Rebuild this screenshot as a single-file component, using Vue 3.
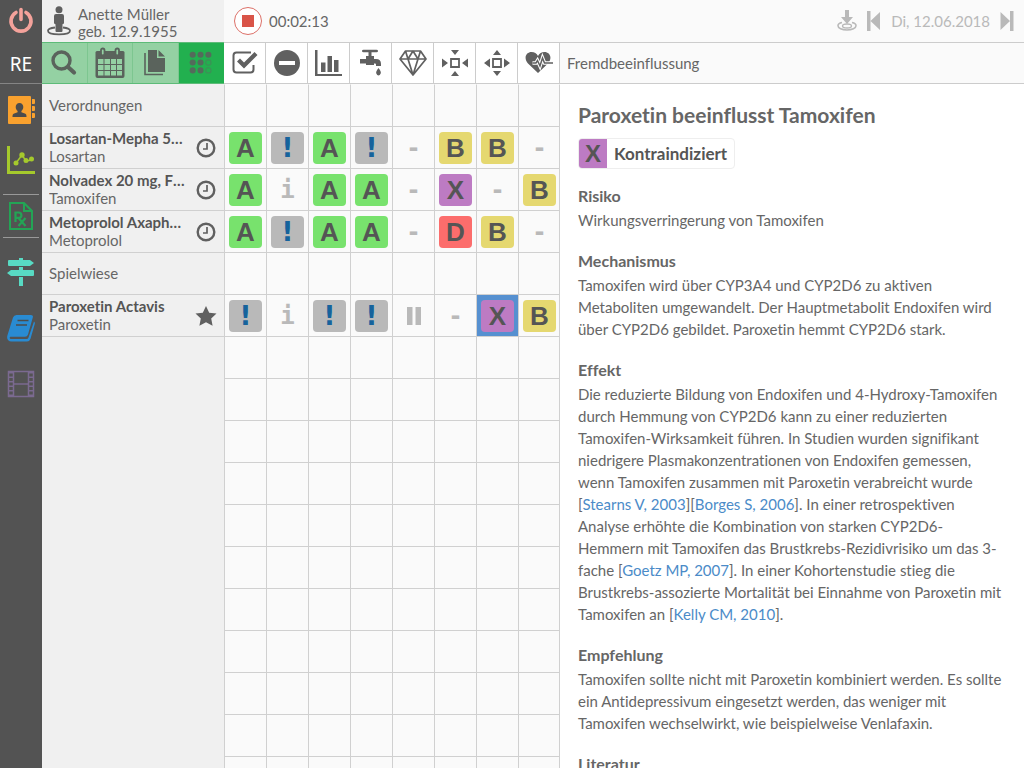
<script setup>
const rows = [
  { title: 'Verordnungen' },
  { name: 'Losartan-Mepha 50 mg, Filmtabletten', agent: 'Losartan', icon: 'clock', cells: 'A!A!-BB-' },
  { name: 'Nolvadex 20 mg, Filmtabletten', agent: 'Tamoxifen', icon: 'clock', cells: 'AiAA-X-B' },
  { name: 'Metoprolol Axapharm 50 mg', agent: 'Metoprolol', icon: 'clock', cells: 'A!AA-DB-' },
  { title: 'Spielwiese' },
  { name: 'Paroxetin Actavis', agent: 'Paroxetin', icon: 'star', cells: '!i!!"-XB', selected: 6 },
  ...Array.from({ length: 11 }, () => ({}))
]
const kinds = { A: 'ok', '!': 'warn', i: 'info', '-': 'none', '"': 'pause', B: 'minor', X: 'contra', D: 'major' }
const columns = ['check', 'minus', 'bars', 'tap', 'gem', 'inward', 'outward', 'heart']
const labels = ['Indikation', 'Kontraindikation', 'Dosierung', 'Niere', 'Qualität', 'Wird beeinflusst', 'Fremdbeeinflussung', 'Herz']
const cellOf = (row, i) => (row.cells ? row.cells[i] : '')
</script>

<template>
  <div class="app">
    <nav class="side" aria-label="Hauptmenü">
      <button class="power" aria-label="Abmelden">
        <svg width="26" height="28" viewBox="0 0 26 28" fill="none" stroke="#f4a29b" stroke-width="3.6" stroke-linecap="round"><path d="M8 5.5a10 10 0 1 0 10 0M13 2.5v10" /></svg>
      </button>
      <div class="user">RE</div>
      <button class="contacts" aria-label="Patienten">
        <svg width="28" height="30" viewBox="0 0 28 30"><path fill="#f9a12e" d="M2 1h21q1 0 1 1v26q0 1-1 1H2q-1 0-1-1V2q0-1 1-1zM25 4h2q1 0 1 1v3q0 1-1 1h-2zM25 11h2q1 0 1 1v3q0 1-1 1h-2zM25 18h2q1 0 1 1v3q0 1-1 1h-2z" /><path fill="#4c4c4c" d="M12.500 8c2.400 0 3.800 1.700 3.800 4 0 1.700-.8 3.200-1.900 4v1.300l4 1.500c.8.400 1.100 1.200 1.100 3.200h-14c0-2 .3-2.800 1.100-3.200l4-1.500V16c-1.100-.8-1.900-2.300-1.900-4 0-2.300 1.400-4 3.800-4z" /></svg>
      </button>
      <button class="chart" aria-label="Verlauf">
        <svg width="28" height="28" viewBox="0 0 28 28" fill="none" stroke="#a5c92c"><path stroke-width="3" d="M1.500 0v26.500H28" /><path stroke-width="1.500" d="M9 17l6-8 4 6 6-1" /><g fill="#a5c92c" stroke="none"><circle cx="9" cy="17" r="2.500" /><circle cx="15" cy="9" r="2.700" /><circle cx="19" cy="14.500" r="2.500" /><circle cx="24.500" cy="13" r="2.500" /></g></svg>
      </button>
      <button class="rx" aria-label="Medikation">
        <svg width="24" height="28" viewBox="0 0 24 28" fill="none" stroke="#23a455"><path stroke-width="2" d="M1 1h14l8 8v18H1zM15 1v8h8" /><path stroke-width="2.200" d="M6.500 20V10.500h3.200a2.700 2.700 0 0 1 0 5.400H6.500M9.500 16l7 8M16.500 16l-7 8" /></svg>
      </button>
      <button class="item" aria-label="Leitlinien">
        <svg width="28" height="28" viewBox="0 0 28 28" fill="#58dac3"><path d="M12 0h4v2h-4zM2 2h21l4 3-4 3H2q-1 0-1-1V3q0-1 1-1zM12 9h4v3h-4zM4 12h22q1 0 1 1v4q0 1-1 1H4l-4-3zM12 19h4v9h-4z" /></svg>
      </button>
      <button class="item" aria-label="Kompendium">
        <svg width="28" height="28" viewBox="0 0 28 28"><path fill="#298bd2" d="M9.500 1H24q2.500 0 1.800 2.500L21 20.500q-.8 2.200-3 2.200H3.800c-1.600 0-1.400 2.300.2 2.300h15.500q1.500 0 2-1.500L27 7.500q1.200.9.800 2.300l-4.300 15q-.8 2.700-3.500 2.700H4.500C1 27.500-.6 24.600.4 21.500L6 3.500Q6.900 1 9.500 1z" /><path stroke="#4c4c4c" stroke-width="1.600" d="M10.500 6.500h11M9 11h11" /></svg>
      </button>
      <button class="item" aria-label="Videos">
        <svg width="28" height="28" viewBox="0 0 28 28" fill="none" stroke="#7b6a90"><path stroke-width="1.500" d="M1.500 1.500h25v25h-25zM6.500 1v26M21.500 1v26M6.500 14h15" /><path stroke-width="5" stroke-dasharray="1.500 3" d="M4 2v24M24 2v24" /></svg>
      </button>
    </nav>

    <div class="work">
      <header class="top">
        <div class="patient">
          <svg width="24" height="30" viewBox="0 0 24 30"><circle cx="12" cy="3.800" r="3.500" fill="#606060" /><path fill="#606060" d="M9 8h6q2 0 2 2v7q0 1-1.500 1.200V25q0 1-1 1h-5q-1 0-1-1v-6.800Q7 18 7 17v-7q0-2 2-2z" /><path fill="none" stroke="#606060" stroke-width="1.800" d="M8 21.500c-4 .5-7 1.600-7 3.200 0 2.300 5 3.600 11 3.600s11-1.300 11-3.600c0-1.600-3-2.700-7-3.200" /></svg>
          <div class="person">Anette Müller<br>geb. 12.9.1955</div>
        </div>
        <div class="session">
          <button class="record" aria-label="Aufnahme stoppen"><span class="stop"></span></button>
          <span class="timer">00:02:13</span>
          <div class="day">
            <button aria-label="Heute"><svg width="20" height="22" viewBox="0 0 20 22"><path fill="#b9b9b9" d="M8 0h4v7h4l-6 7-6-7h4z" /><path fill="none" stroke="#b9b9b9" stroke-width="1.600" d="M5 12.500c-2.500.5-4 1.500-4 3.200 0 2.500 4 4.300 9 4.300s9-1.800 9-4.300c0-1.700-1.500-2.700-4-3.200" /><ellipse cx="10" cy="16" rx="4.500" ry="2" fill="none" stroke="#b9b9b9" stroke-width="1.300" /></svg></button>
            <button aria-label="Vorheriger Tag"><svg width="14" height="20" viewBox="0 0 14 20"><path fill="#b9b9b9" d="M0 0h3.500v20H0zM13 1v18L3.500 10z" /></svg></button>
            <span class="date">Di, 12.06.2018</span>
            <button aria-label="Nächster Tag"><svg width="14" height="20" viewBox="0 0 14 20"><path fill="#b9b9b9" d="M10 0h3.500v20H10zM.5 1v18L10 10z" /></svg></button>
          </div>
        </div>
      </header>

      <div class="tools">
        <div class="views">
          <button aria-label="Suche"><svg width="28" height="28" viewBox="0 0 28 28" fill="none" stroke="#5a635c"><circle cx="11.500" cy="11.500" r="8.500" stroke-width="3.400" /><path stroke-width="4.200" stroke-linecap="round" d="M18.500 18.500l5.500 5" /></svg></button>
          <button aria-label="Kalender"><svg width="30" height="32" viewBox="0 0 30 32"><path fill="#5a635c" d="M2 4h26q1.500 0 1.500 1.500V29q0 2-2 2h-25q-2 0-2-2V5.500Q.5 4 2 4z" /><path fill="#94d1a3" d="M3 12h5.500v5H3zM9.500 12H15v5H9.500zM16 12h5v5h-5zM22 12h5v5h-5zM3 18h5.500v5H3zM9.500 18H15v5H9.500zM16 18h5v5h-5zM22 18h5v5h-5zM3 24h5.500v4.500H3zM9.500 24H15v4.500H9.500zM16 24h5v4.500h-5zM22 24h5v4.500h-5z" /><g fill="#94d1a3" stroke="#5a635c" stroke-width="1.800"><rect x="6" y="1.500" width="3.500" height="7" rx="1.700" /><rect x="20.500" y="1.500" width="3.500" height="7" rx="1.700" /></g></svg></button>
          <button aria-label="Dokumente"><svg width="24" height="28" viewBox="0 0 24 28"><path fill="#5a635c" d="M5 1h9v8h8v14H5zM15.500 1L22 7.500h-6.500z" /><path fill="none" stroke="#5a635c" stroke-width="1.600" d="M2 4v21.500h18" /></svg></button>
          <button class="active" aria-label="Matrix"><svg width="24" height="24" viewBox="0 0 26 26"><g fill="#546b5b"><circle v-for="n in 7" :key="n" :cx="[4, 12.500, 21, 4, 12.500, 4, 12.500][n - 1]" :cy="[4, 4, 4, 12.500, 12.500, 21, 21][n - 1]" r="3.300" /></g><g fill="none" stroke="#3d9057" stroke-width="1.200"><circle cx="21" cy="12.500" r="2.900" /><circle cx="21" cy="21" r="2.900" /></g></svg></button>
        </div>
        <div class="checks">
          <button v-for="(c, i) in columns" :key="c" :aria-label="labels[i]">
            <svg width="28" height="28" viewBox="0 0 28 28" fill="#606060">
              <template v-if="c === 'check'"><path fill="none" stroke="#606060" stroke-width="2" d="M20 3.500H5.500q-3 0-3 3v14q0 3 3 3h14q3 0 3-3V16" /><path d="M6 12.500l3-3 4 4L23.500 3l3 3L13 19.500z" /></template>
              <template v-else-if="c === 'minus'"><circle cx="14" cy="14" r="13" /><rect x="6" y="12" width="16" height="4" fill="#fff" /></template>
              <template v-else-if="c === 'bars'"><path d="M0 1h2.500v24H27v2H0zM6 13.500h4.500V23H6zM12.500 7H17v16h-4.500zM19 11h4.500v12H19z" /></template>
              <template v-else-if="c === 'tap'"><path d="M5 2q0-1.300 1.500-1.300h13Q21 .7 21 2t-1.500 1.300h-13Q5 3.300 5 2zM11.500 3h3v4h-3zM9 7h8v3h2q5 0 5 5v2h-5v-1.500q0-1-1-1h-1V16H9v-1.500H3V10h6zM21.500 19q3 3.500 2.200 5.500t-2.200 2-2.200-2 2.200-5.500z" /></template>
              <template v-else-if="c === 'gem'"><path fill="none" stroke="#606060" stroke-width="1.700" stroke-linejoin="round" d="M6.500 2h15l5.500 8-13 16L1 10zM1 10h26M6.500 2L9 10l5 16 5-16 2.500-8M9 10l5-8 5 8" /></template>
              <template v-else-if="c === 'inward'"><path fill="none" stroke="#606060" stroke-width="1.800" d="M10 10h8v8h-8z" /><path d="M10 1h8l-4 5zM10 27h8l-4-5zM1 9.500v9L7 14zM27 9.500v9L21 14z" /></template>
              <template v-else-if="c === 'outward'"><path fill="none" stroke="#606060" stroke-width="1.800" d="M10 10h8v8h-8z" /><path d="M10 6h8l-4-5zM10 22h8l-4 5zM7 9.500v9L1 14zM21 9.500v9l6-4.500z" /></template>
              <template v-else><path d="M13 24L3 14.500C-2 8.500 1.500 3 6.500 3q4.500 0 6.500 4 2-4 6.500-4C24.500 3 28 8.500 23 14.500z" /><path fill="none" stroke="#fff" stroke-width="3.600" d="M7.500 14H11l1.500-2.500 2.500 5.500 2.500-8 2 5H28" /><path fill="none" stroke="#606060" stroke-width="1.500" d="M7.500 14H11l1.500-2.500 2.500 5.500 2.500-8 2 5H28" /></template>
            </svg>
          </button>
        </div>
        <div class="caption">Fremdbeeinflussung</div>
      </div>

      <main class="body">
        <div class="matrix">
          <table>
            <tbody>
              <tr v-for="(row, r) in rows" :key="r">
                <th scope="row" :class="{ blank: !row.title && !row.name && r > 6 }">
                  <div v-if="row.title" class="group">{{ row.title }}</div>
                  <div v-else-if="row.name" class="drug">
                    <div class="names"><strong>{{ row.name }}</strong><span>{{ row.agent }}</span></div>
                    <svg v-if="row.icon === 'clock'" width="22" height="20" viewBox="-1 0 22 20" fill="none" stroke="#606060"><circle cx="10" cy="10" r="8.300" stroke-width="2.400" /><path stroke-width="1.700" d="M11 5v6H7" /></svg>
                    <svg v-else width="22" height="20" viewBox="0 0 22 20" fill="#606060"><path d="M11 0l3.200 6.700 7.300.9-5.300 5 1.400 7.200L11 16.200l-6.600 3.600 1.400-7.200-5.300-5 7.300-.9z" /></svg>
                  </div>
                </th>
                <td v-for="(c, i) in columns" :key="c" :class="{ selected: row.selected === i }">
                  <button v-if="cellOf(row, i)" class="badge" :class="kinds[cellOf(row, i)]" :aria-label="labels[i]">
                    <svg v-if="cellOf(row, i) === '&quot;'" width="14" height="18" viewBox="0 0 14 18" fill="#b9b9b9"><path d="M0 0h5.500v18H0zM8.500 0H14v18H8.500z" /></svg>
                    <template v-else>{{ cellOf(row, i) }}</template>
                  </button>
                </td>
              </tr>
            </tbody>
          </table>
        </div>

        <article class="detail">
          <h1>Paroxetin beeinflusst Tamoxifen</h1>
          <div class="rating"><span class="mark">X</span><span class="verdict">Kontraindiziert</span></div>
          <section>
            <h2>Risiko</h2>
            <p>Wirkungsverringerung von Tamoxifen</p>
          </section>
          <section>
            <h2>Mechanismus</h2>
            <p>Tamoxifen wird über CYP3A4 und CYP2D6 zu aktiven Metaboliten umgewandelt. Der Hauptmetabolit Endoxifen wird über CYP2D6 gebildet. Paroxetin hemmt CYP2D6 stark.</p>
          </section>
          <section>
            <h2>Effekt</h2>
            <p>Die reduzierte Bildung von Endoxifen und 4-Hydroxy-Tamoxifen durch Hemmung von CYP2D6 kann zu einer reduzierten Tamoxifen-Wirksamkeit führen. In Studien wurden signifikant niedrigere Plasmakonzentrationen von Endoxifen gemessen, wenn Tamoxifen zusammen mit Paroxetin verabreicht wurde [<a href="#stearns">Stearns V, 2003</a>][<a href="#borges">Borges S, 2006</a>]. In einer retrospektiven Analyse erhöhte die Kombination von starken CYP2D6-Hemmern mit Tamoxifen das Brustkrebs-Rezidivrisiko um das 3-fache [<a href="#goetz">Goetz MP, 2007</a>]. In einer Kohortenstudie stieg die Brustkrebs-assozierte Mortalität bei Einnahme von Paroxetin mit Tamoxifen an [<a href="#kelly">Kelly CM, 2010</a>].</p>
          </section>
          <section>
            <h2>Empfehlung</h2>
            <p>Tamoxifen sollte nicht mit Paroxetin kombiniert werden. Es sollte ein Antidepressivum eingesetzt werden, das weniger mit Tamoxifen wechselwirkt, wie beispielweise Venlafaxin.</p>
          </section>
          <section>
            <h2>Literatur</h2>
          </section>
        </article>
      </main>
    </div>
  </div>
</template>

<style>
body { margin: 0; }
</style>

<style scoped>
* { box-sizing: border-box; }
button { border: 0; padding: 0; margin: 0; background: none; display: flex; align-items: center; justify-content: center; cursor: pointer; font: inherit; color: inherit; }
svg { display: block; flex: none; }
.app { display: flex; height: 100vh; overflow: hidden; font: 15px/18px Lato, "Liberation Sans", sans-serif; font-variant-ligatures: no-common-ligatures; color: #666; background: #fafafa; }

.side { flex: none; width: 42px; background: #535353; display: flex; flex-direction: column; align-items: center; }
.power { width: 42px; height: 42px; }
.user { width: 42px; height: 42px; border-bottom: 1px solid #858585; color: #fff; font: 19px/44px "Noto Sans", sans-serif; text-align: center; }
.contacts { width: 42px; height: 52px; }
.chart { width: 42px; height: 48px; }
.rx { width: 36px; height: 44px; margin: 10px 0 6px; border-top: 1px solid #999; border-bottom: 1px solid #999; }
.item { width: 42px; height: 56px; }

.work { flex: 1; min-width: 0; display: flex; flex-direction: column; }
.top { flex: none; height: 42px; display: flex; }
.patient { flex: none; width: 182px; background: #f0f0f0; display: flex; align-items: center; gap: 7px; padding-left: 5px; }
.person { line-height: 17px; padding-top: 4px; }
.session { flex: 1; display: flex; align-items: center; padding: 0 10px 0 10px; }
.record { width: 28px; height: 28px; border: 1px solid #dc7068; border-radius: 50%; background: #fff; }
.stop { width: 12px; height: 12px; background: #d95448; }
.timer { margin-left: 7px; }
.day { margin-left: auto; display: flex; align-items: center; gap: 10px; color: #b9b9b9; }

.tools { flex: none; height: 42px; display: flex; }
.views { flex: none; width: 182px; display: flex; background: #94d1a3; border-top: 1px solid #5dbb78; border-bottom: 1px solid #5dbb78; }
.views button { flex: 1; border-right: 1px solid #7dc690; }
.views .active { background: #22b04f; border-color: #22b04f; }
.checks { flex: none; width: 336px; display: flex; background: #fff; border-top: 1px solid #ccc; border-bottom: 1px solid #ccc; }
.checks button { flex: 1; border-right: 1px solid #ccc; }
.caption { flex: 1; border-top: 1px solid #ccc; border-bottom: 1px solid #ccc; padding-left: 7px; line-height: 40px; }

.body { flex: 1; min-height: 0; display: flex; }
.matrix { flex: none; width: 518px; overflow: hidden; }
table { width: 518px; table-layout: fixed; border-collapse: separate; border-spacing: 0; }
tr { height: 42px; }
th { width: 182px; height: 42px; padding: 0 7px; background: #f0f0f0; border-top: 1px solid #d0d0d0; font-weight: 400; text-align: left; }
td { height: 42px; padding: 0 0 0 4px; border-top: 1px solid #d0d0d0; border-left: 1px solid #d0d0d0; }
td:last-child { border-right: 1px solid #d0d0d0; }
tr:first-child th { border-top-color: #f0f0f0; }
tr:first-child td { border-top-color: #fafafa; }
th.blank { border-top-color: #f0f0f0; }
.group, .names { padding-bottom: 2px; }
.drug { display: flex; align-items: center; justify-content: space-between; }
.names { width: 137px; }
.names strong, .names span { display: block; overflow: hidden; white-space: nowrap; text-overflow: ellipsis; }
.names strong { color: #555; }
.badge { width: 33px; height: 32px; border-radius: 4px; font: bold 26px/32px "Liberation Sans", sans-serif; color: #555; }
.ok { background: #78e26d; }
.minor { background: #e5d870; }
.contra { background: #bd7bc3; }
.major { background: #fc6d6c; }
.warn { background: #b9b9b9; color: #16639c; font: bold 26px/32px "DejaVu Sans", sans-serif; }
.info { color: #b9b9b9; font: bold 24px/32px "DejaVu Sans Mono", monospace; }
.none { color: #b9b9b9; font: bold 24px/32px "DejaVu Sans", sans-serif; }
.selected { background: #5690d0; }

.detail { flex: 1; min-width: 0; overflow: hidden; background: #fff; padding: 17px 16px 0 18px; line-height: 22px; }
h1 { margin: 0; font-size: 21px; line-height: 28px; font-weight: 700; }
.rating { display: inline-flex; margin: 9px 0 14px; border: 1px solid #eee; border-radius: 4px; height: 31px; color: #555; overflow: hidden; }
.mark { width: 28px; background: #bd7bc3; text-align: center; font: bold 24px/30px "Liberation Sans", sans-serif; }
.verdict { padding: 0 7px; font-size: 17px; font-weight: 700; line-height: 29px; }
section { margin-bottom: 17px; }
h2 { margin: 0; font-size: 16px; line-height: 26px; font-weight: 700; }
p { margin: 0; }
a { color: #4b8bc8; text-decoration: none; }
</style>
